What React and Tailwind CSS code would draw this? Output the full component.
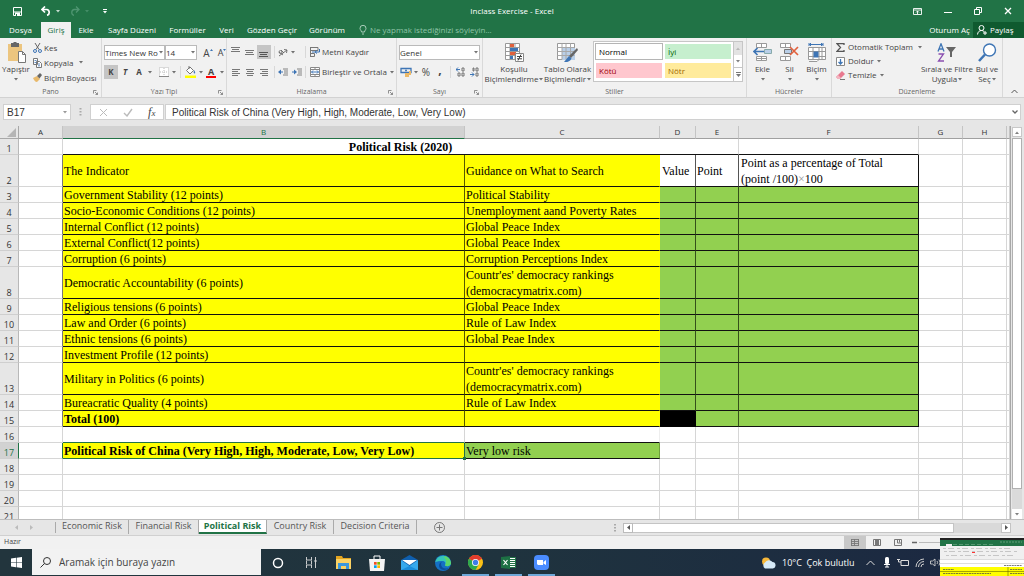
import clsx from "clsx";

const ribbonTabs = [
  { name: "Dosya", width: "w-[41px]" },
  { name: "Giriş", width: "w-[30px]", active: true },
  { name: "Ekle", width: "w-[30px]" },
  { name: "Sayfa Düzeni", width: "w-[62px]" },
  { name: "Formüller", width: "w-[49px]" },
  { name: "Veri", width: "w-[29px]" },
  { name: "Gözden Geçir", width: "w-[62px]" },
  { name: "Görünüm", width: "w-[48px]" },
];

const columns = [
  { name: "A", width: "w-[44px]" },
  { name: "B", width: "w-[402px]" },
  { name: "C", width: "w-[195px]" },
  { name: "D", width: "w-[36px]" },
  { name: "E", width: "w-[43px]" },
  { name: "F", width: "w-[180px]" },
  { name: "G", width: "w-[44px]" },
  { name: "H", width: "w-[44px]" },
  { name: "", width: "" },
];

const indicators = [
  { row: 3, name: "Government Stability (12 points)", guide: "Political Stability" },
  { row: 4, name: "Socio-Economic Conditions (12 points)", guide: "Unemployment aand Poverty Rates" },
  { row: 5, name: "Internal Conflict (12 points)", guide: "Global Peace Index" },
  { row: 6, name: "External Conflict(12 points)", guide: "Global Peace Index" },
  { row: 7, name: "Corruption (6 points)", guide: "Corruption Perceptions Index" },
  { row: 8, name: "Democratic Accountability (6 points)", guide: "Countr'es' democracy rankings\n(democracymatrix.com)", tall: true },
  { row: 9, name: "Religious tensions (6 points)", guide: "Global Peace Index" },
  { row: 10, name: "Law and Order (6 points)", guide: "Rule of Law Index" },
  { row: 11, name: "Ethnic tensions (6 points)", guide: "Global Peae Index" },
  { row: 12, name: "Investment Profile (12 points)", guide: "" },
  { row: 13, name: "Military in Politics (6 points)", guide: "Countr'es' democracy rankings\n(democracymatrix.com)", tall: true },
  { row: 14, name: "Bureacratic Quality (4 points)", guide: "Rule of Law Index" },
  { row: 15, name: "Total (100)", guide: "", total: true },
];

const sheets = [
  { name: "Economic Risk", width: "w-[73px]" },
  { name: "Financial Risk", width: "w-[70px]" },
  { name: "Political Risk", width: "w-[68px]", active: true },
  { name: "Country Risk", width: "w-[67px]" },
  { name: "Decision Criteria", width: "w-[83px]" },
];

/* ---------- small shared pieces ---------- */

function Svg({ w, h, children, className }) {
  return (
    <svg width={w} height={h} viewBox={`0 0 ${w} ${h}`} fill="none" className={clsx("shrink-0", className)} aria-hidden="true">
      {children}
    </svg>
  );
}

function Caret({ className }) {
  return (
    <Svg w={4} h={3} className={className}>
      <path d="M0 0h4L2 2.500z" fill="currentColor" fillOpacity=".75" />
    </Svg>
  );
}

function Tool({ label, width = "w-[14px]", active, children }) {
  return (
    <button aria-label={label} className={clsx("flex h-[14px] shrink-0 items-center justify-center", width, active && "bg-[#c5c5c5]")}>
      {children}
    </button>
  );
}

function Divider() {
  return <span className="h-3 w-px shrink-0 bg-[#d8d8d8]" />;
}

function Group({ label, width, launcher, children }) {
  return (
    <section className={clsx("flex shrink-0 flex-col border-r border-[#d9d9d9]", width)}>
      <div className="flex h-12 text-[#444]">{children}</div>
      <div className="relative flex h-[11px] items-center justify-center text-[7px] leading-none text-[#666]">
        {label}
        {launcher && (
          <Svg w={5} h={5} className="absolute right-[3px] top-[4px]">
            <path d="M.5 3.500v-3h3M2 2l2.500 2.500M4.500 2.500v2h-2" stroke="#777" strokeWidth=".8" />
          </Svg>
        )}
      </div>
    </section>
  );
}

function BigButton({ icon, lines, width }) {
  return (
    <button className={clsx("flex shrink-0 flex-col items-center pt-[3px] whitespace-nowrap", width)}>
      <span className="flex h-[23px] items-center">{icon}</span>
      <span className="leading-[10px]">{lines[0]}</span>
      <span className="flex h-[10px] items-center gap-px leading-[10px]">
        {lines[1]}
        <Caret />
      </span>
    </button>
  );
}

function SelectBox({ label, value, width }) {
  return (
    <div className={clsx("relative h-[15px] shrink-0", width)}>
      <select aria-label={label} className="block h-full w-full appearance-none border border-[#bababa] bg-white pl-0 text-[8px] leading-[13px] text-[#333]">
        <option>{value}</option>
      </select>
      <Caret className="pointer-events-none absolute right-[2px] top-[6px] text-[#444]" />
    </div>
  );
}

function Lines({ rows, color = "#777" }) {
  return (
    <Svg w={10} h={10}>
      {rows.map(([x, y, len]) => (
        <path key={y} d={`M${x} ${y + 0.5}h${len}`} stroke={color} />
      ))}
    </Svg>
  );
}

/* ---------- title bar ---------- */

function TitleBar() {
  return (
    <header className="relative flex h-[22px] shrink-0 items-center justify-between text-white">
      <div className="flex items-center pl-[13px]">
        <button aria-label="Kaydet">
          <Svg w={9} h={9}>
            <path d="M.5.5h8v8h-8zM.5 5h8" stroke="#fff" />
            <path d="M2 5.500h5v3H2z" fill="#fff" />
            <path d="M3 7h1v2H3z" fill="#217346" />
          </Svg>
        </button>
        <button aria-label="Geri al" className="ml-[19px] flex items-center gap-[5px]">
          <Svg w={10} h={10}>
            <path d="M1 3.500h5a3 3 0 0 1 0 5.800M4 .5l-3 3 3 3" stroke="#fff" strokeWidth="1.700" />
          </Svg>
          <Caret />
        </button>
        <button aria-label="Yinele" className="ml-[10px] flex items-center gap-[5px] text-[#4f9571]">
          <Svg w={10} h={10}>
            <path d="M9 3.500H4a3 3 0 0 0 0 5.800M6 .5l3 3-3 3" stroke="currentColor" strokeWidth="1.300" />
          </Svg>
          <Caret />
        </button>
        <button aria-label="Hızlı erişim" className="ml-[14px]">
          <Svg w={4} h={5}>
            <path d="M0 .5h4" stroke="#fff" />
            <path d="M0 2h4L2 4.500z" fill="#fff" />
          </Svg>
        </button>
      </div>
      <h1 className="pointer-events-none absolute inset-x-0 text-center text-[8px]">Inclass Exercise - Excel</h1>
      <div className="flex items-center gap-[22px] pr-3">
        <button aria-label="Şerit seçenekleri">
          <Svg w={9} h={7}>
            <path d="M.5.5h8v6h-8zM.5 2h8M4.500 6V3M3 4.500L4.500 3 6 4.500" stroke="#fff" strokeWidth=".9" />
          </Svg>
        </button>
        <button aria-label="Simge durumuna küçült">
          <Svg w={8} h={8}><path d="M0 5.500h8" stroke="#fff" /></Svg>
        </button>
        <button aria-label="Geri yükle">
          <Svg w={8} h={8}><path d="M.5 2.500h5v5h-5zM2.500 2.500v-2h5v5h-2" stroke="#fff" /></Svg>
        </button>
        <button aria-label="Kapat">
          <Svg w={8} h={8}><path d="M1 1l6 6M7 1L1 7" stroke="#fff" strokeWidth="1.300" /></Svg>
        </button>
      </div>
    </header>
  );
}

function TabBar() {
  return (
    <nav className="flex h-4 shrink-0 text-[8px] text-white">
      {ribbonTabs.map((tab) => (
        <button
          key={tab.name}
          className={clsx("shrink-0 text-center whitespace-nowrap", tab.width, tab.active && "bg-[#f1f1f1] text-[#217346]")}
        >
          {tab.name}
        </button>
      ))}
      <label className="ml-2 flex flex-1 items-center gap-[3px]">
        <Svg w={8} h={10}>
          <path d="M2.500 7C2.500 5.500 1 5 1 3.300a3 3 0 0 1 6 0C7 5 5.500 5.500 5.500 7zM3 9h2" stroke="#a9cdb9" />
        </Svg>
        <input
          aria-label="Yardım ara"
          placeholder="Ne yapmak istediğinizi söyleyin..."
          className="w-full min-w-0 bg-transparent outline-none placeholder:text-[#8fc3a6] placeholder:opacity-100"
        />
      </label>
      <button className="w-[47px] shrink-0 text-center whitespace-nowrap">Oturum Aç</button>
      <button className="flex w-[51px] shrink-0 items-center gap-[3px] bg-[#0f5a2f] pl-[4px]">
        <Svg w={10} h={10}>
          <circle cx="4.500" cy="3" r="2.500" stroke="#fff" />
          <path d="M.5 9.500c.3-2.500 1.700-4 4-4 1 0 2 .4 2.500 1M6 8h4M8 6v4" stroke="#fff" />
        </Svg>
        Paylaş
      </button>
    </nav>
  );
}

/* ---------- ribbon ---------- */

function ClipboardGroup() {
  return (
    <Group label="Pano" width="w-[102px]" launcher>
      <BigButton
        width="w-8"
        lines={["Yapıştır", ""]}
        icon={
          <Svg w={19} h={21}>
            <path d="M1 2h14v17H1z" fill="#ecc57f" />
            <path d="M4 1h2l1-1h2l1 1h2v4H4z" fill="#666" />
            <path d="M11.500 9.500h4l3 3v8h-7z" fill="#fff" stroke="#777" />
            <path d="M15.500 9.500v3h3" stroke="#777" />
          </Svg>
        }
      />
      <div className="flex flex-col pt-[2px] pl-[1px] [&>button]:flex [&>button]:h-[15px] [&>button]:items-center [&>button]:gap-[2px] [&>button]:whitespace-nowrap">
        <button>
          <Svg w={9} h={10}>
            <path d="M2 0l4 6.500M7 0L3 6.500" stroke="#666" />
            <circle cx="2" cy="8" r="1.500" stroke="#3e75b5" />
            <circle cx="7" cy="8" r="1.500" stroke="#3e75b5" />
          </Svg>
          Kes
        </button>
        <button>
          <Svg w={9} h={10}>
            <path d="M.5.5h4v6h-4zM3.500 3.500h3l2 2v4h-5z" fill="#fff" stroke="#777" />
            <path d="M1.500 2.500h2M1.500 4.500h2M5 6h2M5 7.800h2" stroke="#3e75b5" strokeWidth=".8" />
          </Svg>
          Kopyala
          <Caret className="ml-[3px]" />
        </button>
        <button>
          <Svg w={9} h={9}>
            <path d="M0 5l4-2 3 3-3 3C2 9 1 7 0 5z" fill="#e8b96b" />
            <path d="M4 3l3-3 2 2-2.500 3.500z" fill="#666" />
          </Svg>
          Biçim Boyacısı
        </button>
      </div>
    </Group>
  );
}

function FontGroup() {
  return (
    <Group label="Yazı Tipi" width="w-[125px]" launcher>
      <div className="flex flex-col gap-[5px] pt-[7px] pl-[2px]">
        <div className="flex items-center">
          <SelectBox label="Yazı tipi" value="Times New Ro" width="w-[61px]" />
          <SelectBox label="Yazı tipi boyutu" value="14" width="w-8" />
          <Tool label="Büyüt" width="ml-1 w-[14px]">
            <span className="text-[10px] leading-none">A</span>
            <Svg w={3} h={8}><path d="M0 2l1.500-2L3 2z" fill="#3e75b5" /></Svg>
          </Tool>
          <Tool label="Küçült">
            <span className="text-[9px] leading-none">A</span>
            <Svg w={3} h={8}><path d="M0 0h3L1.500 2z" fill="#3e75b5" /></Svg>
          </Tool>
        </div>
        <div className="flex items-center">
          <Tool label="Kalın" active><b>K</b></Tool>
          <Tool label="İtalik"><b className="italic">T</b></Tool>
          <Tool label="Altı çizili"><b>A</b></Tool>
          <Tool label="Altı çizili seçenekleri" width="w-2"><Caret /></Tool>
          <Tool label="Kenarlık" width="ml-[4px] w-[12px]">
            <Svg w={10} h={10}>
              <path d="M.5.5h9v9h-9z" fill="#fff" stroke="#bbb" strokeDasharray="1 1" />
              <path d="M5 1v8M1 5h8" stroke="#bbb" strokeDasharray="1 1" />
              <path d="M0 9.500h10" stroke="#888" />
            </Svg>
          </Tool>
          <Tool label="Kenarlık seçenekleri" width="w-2"><Caret /></Tool>
          <span className="w-[2px]" />
          <Divider />
          <Tool label="Dolgu rengi" width="ml-[2px] w-[14px]">
            <Svg w={11} h={12}>
              <path d="M5 1L1.500 4.500 5 8l3.500-3.500zM4 0v3" stroke="#777" fill="#fff" />
              <path d="M9 4c1.500 2 1.500 3.500.5 3.500S8.500 6 9 4z" fill="#3e75b5" />
              <path d="M0 9.500h11v2.500H0z" fill="#ff0" />
            </Svg>
          </Tool>
          <Tool label="Dolgu seçenekleri" width="w-[7px]"><Caret /></Tool>
          <Tool label="Yazı rengi">
            <span className="border-b-2 border-[#f00] px-[2px] text-[9px] leading-[9px] font-bold">A</span>
          </Tool>
          <Tool label="Yazı rengi seçenekleri" width="w-[7px]"><Caret /></Tool>
        </div>
      </div>
    </Group>
  );
}

function AlignGroup() {
  return (
    <Group label="Hizalama" width="w-[170px]" launcher>
      <div className="flex flex-col gap-[6px] pt-[7px] pl-[2px]">
        <div className="flex h-[14px] items-center">
          <Tool label="Üste hizala"><Lines rows={[[0, 0, 9], [1, 2, 7], [0, 4, 9]]} /></Tool>
          <Tool label="Ortaya hizala"><Lines rows={[[0, 3, 9], [1, 5, 7], [0, 7, 9]]} /></Tool>
          <Tool label="Alta hizala" active><Lines rows={[[0, 5, 9], [1, 7, 7], [0, 9, 9]]} color="#555" /></Tool>
          <span className="w-[3px]" />
          <Divider />
          <Tool label="Yönlendirme" width="w-[16px]">
            <Svg w={10} h={9}>
              <path d="M1 8l8-6M6 1.500l3 .5-.5 3M1 4l4 3M3 2l3 3" stroke="#666" strokeWidth=".9" />
              <circle cx="2.500" cy="4" r="1.500" stroke="#666" strokeWidth=".8" />
            </Svg>
          </Tool>
          <Caret />
          <span className="w-[10px]" />
          <Divider />
          <button className="ml-1 flex items-center gap-px whitespace-nowrap">
            <Svg w={11} h={10}>
              <path d="M.5 0v10M0 .5h8v3H0M0 6.500h4.500v3H0" stroke="#777" />
              <path d="M2 5h7.500V2M5 5l2-1.500M5 5l2 1.500" stroke="#3e75b5" />
            </Svg>
            Metni Kaydır
          </button>
        </div>
        <div className="flex h-[14px] items-center">
          <Tool label="Sola hizala"><Lines rows={[[1, 2, 8], [1, 4, 6], [1, 6, 8], [1, 8, 6]]} /></Tool>
          <Tool label="Ortala"><Lines rows={[[1, 2, 8], [2, 4, 6], [1, 6, 8], [2, 8, 6]]} /></Tool>
          <Tool label="Sağa hizala"><Lines rows={[[1, 2, 8], [3, 4, 6], [1, 6, 8], [3, 8, 6]]} /></Tool>
          <span className="w-[3px]" />
          <Divider />
          <Tool label="Girintiyi azalt" width="ml-[1px] w-[14px]">
            <Svg w={10} h={8}>
              <path d="M5 1h5M6 3h4M6 5h4M5 7h5" stroke="#777" strokeWidth=".9" />
              <path d="M0 4l3-2.500v5z" fill="#3e75b5" />
              <path d="M2 4h3" stroke="#3e75b5" />
            </Svg>
          </Tool>
          <Tool label="Girintiyi artır">
            <Svg w={10} h={8}>
              <path d="M5 1h5M6 3h4M6 5h4M5 7h5" stroke="#777" strokeWidth=".9" />
              <path d="M5 4L2 1.500v5z" fill="#3e75b5" />
              <path d="M0 4h3" stroke="#3e75b5" />
            </Svg>
          </Tool>
          <span className="w-[1px]" />
          <Divider />
          <button className="ml-1 flex items-center gap-px whitespace-nowrap">
            <Svg w={11} h={10}>
              <path d="M.5.5h9v9h-9zM.5 2.500h9M.5 7.500h9M5 .5v2M5 7.500v2" fill="#fff" stroke="#888" />
              <path d="M1.500 5h7M3 3.500L1.500 5 3 6.500M7 3.500L8.500 5 7 6.500" stroke="#3e75b5" />
            </Svg>
            Birleştir ve Ortala
            <Caret className="ml-[2px]" />
          </button>
        </div>
      </div>
    </Group>
  );
}

function NumberGroup() {
  return (
    <Group label="Sayı" width="w-[86px]" launcher>
      <div className="flex flex-col gap-[5px] pt-[7px] pl-[2px]">
        <SelectBox label="Sayı biçimi" value="Genel" width="w-[81px]" />
        <div className="flex items-center">
          <Tool label="Finansal biçim">
            <Svg w={12} h={10}>
              <path d="M1 1.500h10v4H1z" stroke="#3e75b5" strokeWidth="1.300" />
              <circle cx="6" cy="3.500" r="1" fill="#3e75b5" />
              <path d="M5 6h4v4H5zM9 4h2v4H9z" fill="#ecb968" />
            </Svg>
          </Tool>
          <Tool label="Finansal seçenekler" width="w-[6px]"><Caret /></Tool>
          <Tool label="Yüzde"><span className="text-[10px]">%</span></Tool>
          <Tool label="Virgül"><b className="pb-1 text-[12px] leading-none">,</b></Tool>
          <span className="w-[3px]" />
          <Divider />
          <Tool label="Ondalık artır" width="ml-[2px] w-[14px]">
            <Svg w={9} h={10}>
              <path d="M0 2.500h4M2 .5L0 2.500l2 2" stroke="#3e75b5" />
              <path d="M6 1h2v3H6zM2 6h2v3H2zM6 6h2v3H6z" stroke="#666" strokeWidth=".9" />
            </Svg>
          </Tool>
          <Tool label="Ondalık azalt">
            <Svg w={9} h={10}>
              <path d="M0 7.500h4M2 5.500l2 2-2 2" stroke="#3e75b5" />
              <path d="M6 1h2v3H6zM3 1h1v3H3zM6 6h2v3H6z" stroke="#666" strokeWidth=".9" />
            </Svg>
          </Tool>
        </div>
      </div>
    </Group>
  );
}

function StyleCell({ name, className }) {
  return <button className={clsx("h-[15px] pl-[3px] text-left", className)}>{name}</button>;
}

function StylesGroup() {
  return (
    <Group label="Stiller" width="w-[264px]">
      <BigButton
        width="ml-[2px] w-[58px]"
        lines={["Koşullu", "Biçimlendirme"]}
        icon={
          <Svg w={21} h={20}>
            <path d="M1.500.5h14v16h-14zM6 .5v16M11 .5v16M1.500 4.500h14M1.500 8.500h14M1.500 12.500h14" fill="#fff" stroke="#999" />
            <path d="M6 1h4v3H6zM6 9h6v3H6z" fill="#e0603c" />
            <path d="M6 5h8v3H6zM6 13h3v3H6z" fill="#3e75b5" />
            <path d="M11.500 10.500h8v8h-8z" fill="#fff" stroke="#888" />
            <path d="M13 13.500h5M13 15.800h5M17 11.500l-3 6" stroke="#444" />
          </Svg>
        }
      />
      <BigButton
        width="w-[49px]"
        lines={["Tablo Olarak", "Biçimlendir"]}
        icon={
          <Svg w={22} h={20}>
            <path d="M.5.5h17v16H.5z" fill="#fff" stroke="#999" />
            <path d="M5 5h13v12H5z" fill="#b9cfe8" />
            <path d="M5 .5v16M9 .5v16M13.500 .5v16M.5 4.500h17M.5 8.500h17M.5 12.500h17" stroke="#a8a8a8" />
            <path d="M20 5l-8 8 2 2 7-8z" fill="#666" />
            <path d="M12 13l-5 6c3 .5 6-.5 7.500-3.500z" fill="#3e75b5" />
          </Svg>
        }
      />
      <div className="mt-[3px] ml-[1px] flex h-[41px] flex-1 border border-[#c6c6c6] bg-white">
        <div className="grid flex-1 grid-cols-2 content-start gap-x-[3px] gap-y-1 p-[2px]">
          <StyleCell name="Normal" className="text-black outline outline-[#b5b5b5]" />
          <StyleCell name="İyi" className="bg-[#c6efce] text-[#006100]" />
          <StyleCell name="Kötü" className="bg-[#ffc7ce] text-[#9c0006]" />
          <StyleCell name="Nötr" className="bg-[#ffeb9c] text-[#9c6500]" />
        </div>
        <div className="flex w-[9px] flex-col border-l border-[#c6c6c6] text-[#555] [&>button]:flex [&>button]:flex-1 [&>button]:items-center [&>button]:justify-center">
          <button aria-label="Önceki stiller" className="bg-[#e3e3e3] text-[#aaa]"><Caret className="rotate-180" /></button>
          <button aria-label="Sonraki stiller"><Caret /></button>
          <button aria-label="Tüm stiller" className="border-t border-[#c6c6c6]">
            <Svg w={5} h={5}><path d="M0 .5h5" stroke="#777" /><path d="M0 2h5L2.500 5z" fill="#777" /></Svg>
          </button>
        </div>
      </div>
      <span className="w-[3px]" />
    </Group>
  );
}

function CellsGroup() {
  return (
    <Group label="Hücreler" width="w-[85px]">
      <BigButton
        width="ml-[2px] w-[27px]"
        lines={["Ekle", ""]}
        icon={
          <Svg w={19} h={19}>
            <path d="M3.500 .5h10v4h-10zM8.500 .5v4M3.500 13.500h10v4h-10zM8.500 13.500v4M3.500 15.500h10" fill="#fff" stroke="#999" />
            <path d="M11.500 6.500h7v4h-7z" fill="#b9cfe8" stroke="#8aa" />
            <path d="M1 8.500h10M4.500 5L1 8.500 4.500 12" stroke="#3e75b5" strokeWidth="1.600" />
          </Svg>
        }
      />
      <BigButton
        width="w-[27px]"
        lines={["Sil", ""]}
        icon={
          <Svg w={19} h={19}>
            <path d="M.5 .5h10v4h-10zM5.500 .5v4M.5 13.500h10v4h-10zM5.500 13.500v4" fill="#fff" stroke="#999" />
            <path d="M4.500 6.500h7v4h-7z" fill="#b9cfe8" stroke="#777" />
            <path d="M10 4l8 8M18 4l-8 8" stroke="#e0603c" strokeWidth="1.700" />
          </Svg>
        }
      />
      <BigButton
        width="w-[27px]"
        lines={["Biçim", ""]}
        icon={
          <Svg w={18} h={20}>
            <path d="M1 1.500h14M1 0v3M15 0v3M3 0L1.500 1.500 3 3M13 0l1.500 1.500L13 3" stroke="#3e75b5" />
            <path d="M.5 4.500h17v12H.5zM5 4.500v12M11 4.500v12M14 4.500v12M.5 8.500h17M.5 13.500h17M1 18.500h8l2-2" fill="#fff" stroke="#999" />
            <path d="M5.500 8.500h5v6h-5z" fill="#3e75b5" />
          </Svg>
        }
      />
    </Group>
  );
}

function EditingGroup() {
  return (
    <Group label="Düzenleme" width="w-[171px]">
      <div className="flex w-[88px] shrink-0 flex-col pt-[2px] pl-1 [&>button]:flex [&>button]:h-[14px] [&>button]:items-center [&>button]:gap-[3px] [&>button]:whitespace-nowrap">
        <button>
          <Svg w={9} h={9}><path d="M8 2V.7H1l3.500 3.800L1 8.300h7V7" stroke="#555" strokeWidth="1.300" /></Svg>
          Otomatik Toplam
          <Caret className="ml-[2px]" />
        </button>
        <button>
          <Svg w={9} h={9}>
            <path d="M.5.5h8v8h-8z" fill="#fff" stroke="#888" />
            <path d="M4.500 2v5M2.500 5l2 2 2-2" stroke="#3e75b5" strokeWidth="1.300" />
          </Svg>
          Doldur
          <Caret />
        </button>
        <button>
          <Svg w={9} h={9}>
            <path d="M6 0l3 3-5 5H2L0 6z" fill="#e8798f" />
            <path d="M0 6l2-2 3 3-1 1H2z" fill="#f3b4c0" />
            <path d="M4 8.500h5" stroke="#777" />
          </Svg>
          Temizle
          <Caret />
        </button>
      </div>
      <BigButton
        width="w-[54px]"
        lines={["Sırala ve Filtre", "Uygula"]}
        icon={
          <Svg w={20} h={20}>
            <path d="M1 8.500L4 .800l3 7.700M2 6h4" stroke="#3e75b5" strokeWidth="1.300" />
            <path d="M1.500 11h5l-5 7h5.500" stroke="#8a4fb0" strokeWidth="1.300" />
            <path d="M9 4h10l-4 5v5h-2V9z" fill="#666" />
          </Svg>
        }
      />
      <BigButton
        width="w-[26px]"
        lines={["Bul ve", "Seç"]}
        icon={
          <Svg w={19} h={19}>
            <circle cx="11.500" cy="7" r="6" fill="#fff" stroke="#3e75b5" strokeWidth="1.400" />
            <path d="M7 11.500L1 18" stroke="#3e75b5" strokeWidth="2.500" />
          </Svg>
        }
      />
    </Group>
  );
}

function Ribbon() {
  return (
    <div className="flex h-[60px] shrink-0 border-b border-[#d2d2d2] bg-[#f1f1f1] text-[8px]">
      <ClipboardGroup />
      <FontGroup />
      <AlignGroup />
      <NumberGroup />
      <StylesGroup />
      <CellsGroup />
      <EditingGroup />
      <button aria-label="Şeridi daralt" className="ml-auto self-end pr-[6px] pb-[3px]">
        <Svg w={7} h={5}><path d="M.5 4l3-3 3 3" stroke="#555" /></Svg>
      </button>
    </div>
  );
}

/* ---------- formula bar ---------- */

function FormulaBar() {
  return (
    <div className="flex h-7 shrink-0 items-center px-[3px]">
      <div className="relative">
        <input
          aria-label="Ad kutusu"
          defaultValue="B17"
          className="block h-4 w-[68px] border border-[#d0d0d0] bg-white pl-[3px] font-['Liberation_Sans',sans-serif] text-[10px] text-[#333]"
        />
        <Caret className="absolute top-[7px] right-[4px] text-[#777]" />
      </div>
      <Svg w={3} h={9} className="mx-2">
        <path d="M1.500 0v9" stroke="#aaa" strokeWidth="2" strokeDasharray="1.500 1.500" />
      </Svg>
      <div className="flex h-4 w-[74px] shrink-0 items-center justify-around border border-[#d0d0d0] bg-white">
        <button aria-label="İptal"><Svg w={9} h={9}><path d="M1 1l7 7M8 1L1 8" stroke="#bbb" /></Svg></button>
        <button aria-label="Gir"><Svg w={10} h={9}><path d="M1 5l3 3 5-7" stroke="#bbb" strokeWidth="1.400" /></Svg></button>
        <button aria-label="İşlev ekle" className="font-['Liberation_Serif',serif] text-[12px] leading-none text-[#444] italic">
          f<span className="text-[9px]">x</span>
        </button>
      </div>
      <div className="relative ml-[1px] flex-1">
        <input
          aria-label="Formül çubuğu"
          defaultValue="Political Risk of China (Very High, High, Moderate, Low, Very Low)"
          className="block h-4 w-full border border-[#d0d0d0] bg-white pl-[6px] font-['Liberation_Sans',sans-serif] text-[10px] text-[#333]"
        />
        <Svg w={6} h={4} className="absolute top-[6px] right-[3px]"><path d="M.5.5L3 3 5.500 .5" stroke="#666" strokeWidth="1.300" /></Svg>
      </div>
    </div>
  );
}

/* ---------- sheet ---------- */

const grid = "border-r border-b border-[#d6d6d6]";

function RowHead({ n, selected }) {
  return (
    <th
      scope="row"
      className={clsx(
        "border-r border-b p-0 text-center align-bottom font-['Open_Sans',sans-serif] text-[9px] leading-[11px] font-normal",
        selected ? "border-[#217346] border-b-[#cfcfcf] bg-[#d2d2d2] text-[#217346]" : "border-[#b8b8b8] border-b-[#cfcfcf] bg-[#e6e6e6] text-[#333]"
      )}
    >
      {n}
    </th>
  );
}

function Cell({ children, className, colSpan, tall }) {
  return (
    <td colSpan={colSpan} className={clsx("border-r border-b px-[1px] py-0 align-middle", className)}>
      {children && <div className={clsx("leading-4 whitespace-pre", tall ? "h-[31px]" : "h-[15px]")}>{children}</div>}
    </td>
  );
}

function Blank({ count }) {
  return Array.from({ length: count }, (_, i) => <td key={i} className={grid} />);
}

function Sheet() {
  return (
    <main className="flex min-h-0 flex-1 overflow-hidden bg-[#e6e6e6]">
      <div className="min-w-0 flex-1 overflow-hidden border-r border-[#a8a8a8] bg-white">
        <table className="w-full table-fixed border-separate border-spacing-0 font-['Liberation_Serif',serif] text-[12px] text-black">
          <thead>
            <tr className="h-[13px] bg-[#e6e6e6] font-['Open_Sans',sans-serif] text-[8px] leading-[12px] text-[#333]">
              <th aria-label="Tümünü seç" className="w-[19px] border-r border-b border-[#a8a8a8] p-0">
                <Svg w={10} h={9} className="mr-[1px] ml-auto"><path d="M9 0v9H0z" fill="#b5b5b5" /></Svg>
              </th>
              {columns.map((col) => (
                <th
                  key={col.name}
                  scope="col"
                  className={clsx(
                    "border-r border-b border-r-[#c4c4c4] p-0 font-medium",
                    col.width,
                    col.name === "B" ? "border-b-[#217346] bg-[#d2d2d2] text-[#217346]" : "border-b-[#a0a0a0]"
                  )}
                >
                  {col.name}
                </th>
              ))}
            </tr>
          </thead>
          <tbody>
            <tr className="h-4">
              <RowHead n={1} />
              <td className={grid} />
              <Cell colSpan={4} className="border-r-[#d6d6d6] border-b-[#111] text-center font-bold">Political Risk (2020)</Cell>
              <td className="border-r border-b border-r-[#d6d6d6] border-b-[#111]" />
              <Blank count={3} />
            </tr>
            <tr className="h-8">
              <RowHead n={2} />
              <td className="border-r border-b border-r-[#777] border-b-[#d6d6d6]" />
              <Cell className="border-r-[#555a00] border-b-[#111] bg-[#ff0]">The Indicator</Cell>
              <Cell className="border-r-[#ff0] border-b-[#111] bg-[#ff0]">Guidance on What to Search</Cell>
              <Cell className="border-r-[#555] border-b-[#111] pl-[2px]">Value</Cell>
              <Cell className="border-r-[#555] border-b-[#111]">Point</Cell>
              <Cell tall className="border-[#111] pl-[2px]">
                <div>Point as a percentage of Total</div>
                <div className="flex">
                  <span>(point /100)</span>
                  <span className="text-[#999]">×</span>
                  <span>100</span>
                </div>
              </Cell>
              <Blank count={3} />
            </tr>
            {indicators.map((item) => (
              <tr key={item.row} className={item.tall ? "h-8" : "h-4"}>
                <RowHead n={item.row} />
                <td className="border-r border-b border-r-[#777] border-b-[#d6d6d6]" />
                <Cell className={clsx("border-r-[#555a00] border-b-[#111] bg-[#ff0]", item.total && "font-bold")}>{item.name}</Cell>
                <Cell tall={item.tall} className="border-r-[#ff0] border-b-[#111] bg-[#ff0]">{item.guide}</Cell>
                <Cell className={item.total ? "border-black bg-black" : "border-r-[#35501a] border-b-[#111] bg-[#92d050]"} />
                <Cell className="border-r-[#35501a] border-b-[#111] bg-[#92d050]" />
                <Cell className="border-[#111] bg-[#92d050]" />
                <Blank count={3} />
              </tr>
            ))}
            <tr className="h-4">
              <RowHead n={16} />
              <td className={grid} />
              <td className="border-r border-b border-r-[#d6d6d6] border-b-[#217346]" />
              <td className="border-r border-b border-r-[#eee] border-b-[#111]" />
              <Blank count={6} />
            </tr>
            <tr className="h-4">
              <RowHead n={17} selected />
              <td className="border-r border-b border-r-[#217346] border-b-[#d6d6d6]" />
              <td className="relative border-r border-b border-[#217346] bg-[#ff0] px-[1px] py-0 font-bold">
                <div className="h-[15px] leading-4 whitespace-nowrap">
                  Political Risk of China (Very High, High, Moderate, Low, Very Low)
                </div>
                <span className="absolute -right-[2px] -bottom-[2px] h-[3px] w-[3px] bg-[#217346]" />
              </td>
              <Cell className="border-r-[#6f9f3c] border-b-[#111] bg-[#92d050]">Very low risk</Cell>
              <Blank count={6} />
            </tr>
            {[18, 19, 20, 21].map((n) => (
              <tr key={n} className="h-4">
                <RowHead n={n} />
                <Blank count={9} />
              </tr>
            ))}
          </tbody>
        </table>
      </div>
      <div className="flex w-[13px] shrink-0 flex-col items-center pt-[1px] pr-[1px]">
        <button aria-label="Yukarı kaydır" className="flex h-[10px] w-[10px] items-center justify-center border border-[#c8c8c8] bg-white text-[#555]">
          <Caret className="rotate-180" />
        </button>
        <div className="mt-[1px] w-[10px] flex-1 border border-[#b0b0b0] bg-white" />
        <div className="h-5 w-[10px] bg-[#dadada]" />
        <button aria-label="Aşağı kaydır" className="flex h-[10px] w-[10px] items-center justify-center bg-white text-[#555]">
          <Caret />
        </button>
      </div>
    </main>
  );
}

function SheetTabs() {
  return (
    <div className="flex h-4 shrink-0 border-t border-[#bdbdbd] text-[9px] text-[#555]">
      <div className="my-[2px] flex w-14 shrink-0 items-center gap-3 border-r border-[#aaa] pl-[15px]">
        <button aria-label="Önceki sayfa"><Svg w={3} h={5}><path d="M3 0v5L0 2.500z" fill="#bbb" /></Svg></button>
        <button aria-label="Sonraki sayfa"><Svg w={3} h={5}><path d="M0 0v5l3-2.500z" fill="#bbb" /></Svg></button>
      </div>
      {sheets.map((sheet) => (
        <button
          key={sheet.name}
          className={clsx(
            "flex h-[14px] shrink-0 items-start justify-center border-r leading-[12px] whitespace-nowrap",
            sheet.width,
            sheet.active ? "border-b-2 border-r-[#aaa] border-b-[#217346] bg-white font-bold text-[#217346]" : "border-[#aaa]"
          )}
        >
          {sheet.name}
        </button>
      ))}
      <button aria-label="Yeni sayfa" className="ml-[17px]">
        <Svg w={11} h={11}>
          <circle cx="5.500" cy="5.500" r="5" stroke="#777" />
          <path d="M2.500 5.500h6M5.500 2.500v6" stroke="#777" />
        </Svg>
      </button>
      <div className="ml-auto flex w-[410px] items-center pr-[13px]">
        <Svg w={2} h={8}><path d="M1 0v8" stroke="#aaa" strokeWidth="2" strokeDasharray="1.500 1.500" /></Svg>
        <button aria-label="Sola kaydır" className="ml-[7px] flex h-[10px] w-[10px] items-center justify-center border border-[#bbb] bg-white">
          <Svg w={3} h={5}><path d="M3 0v5L0 2.500z" fill="#555" /></Svg>
        </button>
        <div className="h-[10px] flex-1 border border-l-0 border-[#c4c4c4] bg-white" />
        <div className="h-[10px] w-[47px] bg-[#d9d9d9]" />
        <button aria-label="Sağa kaydır" className="flex h-[10px] w-[10px] items-center justify-center border border-[#c4c4c4] bg-white">
          <Svg w={3} h={5}><path d="M0 0v5l3-2.500z" fill="#555" /></Svg>
        </button>
      </div>
    </div>
  );
}

function StatusBar() {
  return (
    <div className="flex h-[14px] shrink-0 items-center border-t border-[#d0d0d0] bg-[#f1f1f1] pl-[4px] text-[7px] text-[#444]">
      Hazır
      <div className="ml-auto flex h-full w-[180px] items-center">
        <button aria-label="Normal görünüm" className="flex h-full w-[22px] items-center justify-center bg-[#c8c8c8]">
          <Svg w={8} h={7}><path d="M0 .5h8M0 2.500h8M0 4.500h8M0 6.500h8M.5 0v7M3.500 0v7M7.500 0v7" stroke="#777" strokeWidth=".9" /></Svg>
        </button>
        <button aria-label="Sayfa düzeni" className="flex w-[21px] justify-center">
          <Svg w={8} h={7}><path d="M.5.5h7v6h-7z" stroke="#777" /><path d="M2 1h4v5H2z" fill="#777" /></Svg>
        </button>
        <button aria-label="Sayfa sonu önizleme" className="flex w-[22px] justify-center">
          <Svg w={8} h={7}><path d="M.5.5h7v6h-7zM3.500 .5v3.500h4M5.500 .5v3" stroke="#777" /></Svg>
        </button>
        <button aria-label="Uzaklaştır" className="ml-[3px]"><Svg w={5} h={3}><path d="M0 1.500h5" stroke="#666" strokeWidth="1.500" /></Svg></button>
        <input
          aria-label="Yakınlaştırma"
          type="range"
          defaultValue="50"
          className="ml-[2px] h-px w-[70px] appearance-none bg-[#bbb] [&::-webkit-slider-thumb]:h-[7px] [&::-webkit-slider-thumb]:w-[3px] [&::-webkit-slider-thumb]:appearance-none [&::-webkit-slider-thumb]:bg-[#666]"
        />
      </div>
    </div>
  );
}

/* ---------- taskbar ---------- */

function TaskButton({ label, open, children }) {
  return (
    <button aria-label={label} className="relative flex w-[33px] shrink-0 items-center justify-center">
      {children}
      {open && <span className="absolute inset-x-[3px] bottom-0 h-[2px] bg-[#6ea8d8]" />}
    </button>
  );
}

function Taskbar() {
  return (
    <footer className="flex h-[27px] shrink-0 bg-linear-to-r from-[#22353d] via-[#1f333e] via-50% to-[#1b2742] text-[9px] text-white">
      <button aria-label="Başlat" className="flex w-8 shrink-0 items-center justify-center">
        <Svg w={11} h={11}>
          <path d="M0 1.500L5 .8v4.400H0zM5.600 .7L11 0v5.200H5.600zM0 5.800h5v4.400L0 9.500zM5.600 5.800H11V11l-5.400-.8z" fill="#fff" />
        </Svg>
      </button>
      <label className="mb-px flex w-[229px] shrink-0 items-center gap-2 bg-[#f2f2f2] pl-2">
        <Svg w={11} h={11}>
          <circle cx="7" cy="4" r="3.500" stroke="#333" />
          <path d="M4.500 6.500L.5 10.500" stroke="#333" />
        </Svg>
        <input
          aria-label="Ara"
          placeholder="Aramak için buraya yazın"
          className="min-w-0 flex-1 bg-transparent text-[10px] outline-none placeholder:text-[#444] placeholder:opacity-100"
        />
      </label>
      <TaskButton label="Cortana">
        <Svg w={12} h={12}><circle cx="6" cy="6" r="4.500" stroke="#fff" strokeWidth="1.500" /></Svg>
      </TaskButton>
      <TaskButton label="Görev görünümü">
        <Svg w={12} h={11}>
          <path d="M1.500 0v3h5V0M1.500 11V8h5v3M1.500 3.500v4M6.500 3.500v4M10.500 0v11M9 4h3" stroke="#ddd" strokeWidth=".9" />
        </Svg>
      </TaskButton>
      <TaskButton label="Dosya Gezgini">
        <Svg w={15} h={13}>
          <path d="M0 0h6l1 2h8v11H0z" fill="#e3a520" />
          <path d="M0 3h15v10H0z" fill="#fbd263" />
          <path d="M2 7h11v6h-3v-3H5v3H2z" fill="#3b97dc" />
        </Svg>
      </TaskButton>
      <TaskButton label="Microsoft Store">
        <Svg w={16} h={16}>
          <path d="M5 5V1h6v4" stroke="#fff" />
          <path d="M0 4h16l-1 12H1z" fill="#f4f4f4" />
          <path d="M5 7h2.700v2.700H5z" fill="#f25022" />
          <path d="M8.300 7H11v2.700H8.300z" fill="#7fba00" />
          <path d="M5 10.300h2.700V13H5z" fill="#00a4ef" />
          <path d="M8.300 10.300H11V13H8.300z" fill="#ffb900" />
        </Svg>
      </TaskButton>
      <TaskButton label="Posta">
        <Svg w={17} h={15}>
          <path d="M0 5l8.500-5L17 5v10H0z" fill="#0f5fae" />
          <path d="M1 5h15L8.500 10z" fill="#fff" />
          <path d="M0 5l8.500 6L17 5v10H0z" fill="#37a9ec" />
          <path d="M0 15l8.500-4L17 15z" fill="#1c8ddb" />
        </Svg>
      </TaskButton>
      <TaskButton label="Edge">
        <Svg w={16} h={16}>
          <circle cx="8" cy="8" r="8" fill="#1570c4" />
          <path d="M.2 7A8 8 0 0 1 16 8c0 3-4 4-6 2.500 1-2 .5-4.500-2.500-4.500S1.500 6.500.2 7z" fill="#37c5b8" />
          <path d="M10 1a8 8 0 0 1 6 7c0 3-4 4-6 2.500 2-4 1-6-1-8z" fill="#5bd66b" />
          <path d="M6 9c0 3.500 3 5.500 7.500 4-3 3.500-9 2-9.500-2 0-2 1-4 3.500-4.500C6.500 7 6 8 6 9z" fill="#0c4d9b" />
        </Svg>
      </TaskButton>
      <TaskButton label="Chrome" open>
        <Svg w={15} h={15}>
          <circle cx="7.500" cy="7.500" r="7.500" fill="#fbc116" />
          <path d="M7.500 7.500L1 3.750A7.500 7.500 0 0 1 14 3.750z" fill="#e33b2e" />
          <path d="M7.500 7.500L1 3.750A7.500 7.500 0 0 0 7.500 15l3.200-5.600z" fill="#2da94f" />
          <circle cx="7.500" cy="7.500" r="3.500" fill="#fff" />
          <circle cx="7.500" cy="7.500" r="2.700" fill="#3f7de8" />
        </Svg>
      </TaskButton>
      <TaskButton label="Excel" open>
        <Svg w={15} h={13}>
          <path d="M6.500 1.500h8v10h-8z" fill="#fff" stroke="#217346" />
          <path d="M8 3.500h6M8 5.500h6M8 7.500h6M8 9.500h6" stroke="#217346" />
          <path d="M0 1l9-1v13l-9-1z" fill="#1d7044" />
          <path d="M2.500 4l4 5M6.500 4l-4 5" stroke="#fff" strokeWidth="1.200" />
        </Svg>
      </TaskButton>
      <TaskButton label="Zoom" open>
        <Svg w={15} h={15}>
          <rect width="15" height="15" rx="4" fill="#4a8cff" />
          <path d="M3 5h6v5H4L3 9zM9.500 7L12 5v5L9.500 8.500z" fill="#fff" />
        </Svg>
      </TaskButton>

      <div className="ml-auto flex w-[263px] items-center">
        <Svg w={15} h={12}>
          <circle cx="5" cy="4.500" r="4" fill="#f7b83a" />
          <path d="M4 11.500a3.500 3.500 0 0 1 0-6 4.500 4.500 0 0 1 7.500-.5 3.300 3.300 0 0 1 .5 6.500z" fill="#d6eaf8" />
        </Svg>
        <span className="ml-[6px] w-[82px] whitespace-pre">10°C  Çok bulutlu</span>
        <div className="ml-[2px] flex items-center gap-[5px]">
          <Svg w={9} h={6}><path d="M.5 5l4-4 4 4" stroke="#ddd" /></Svg>
          <Svg w={8} h={11} className="ml-[3px]"><rect x="2" width="4" height="7" rx="1.500" fill="#fff" /><path d="M1 7.500h6M4 7v3M2 10h4" stroke="#fff" /></Svg>
          <Svg w={12} h={9} className="ml-[1px]"><path d="M4 2.500h7.500v5H4zM0 1.500h3M1.500 1.500V4H4" stroke="#ddd" /></Svg>
          <Svg w={9} h={10} className="ml-[1px]">
            <path d="M1 9a8 8 0 0 1 8-8M3.500 9A5.500 5.500 0 0 1 9 3.500M6 9a3 3 0 0 1 3-3" stroke="#ccc" />
          </Svg>
          <Svg w={12} h={9} className="ml-[1px]">
            <path d="M.5 3h2L5 1v7L2.500 6h-2zM7 3q1.200 1.500 0 3M9 1.500q2 3 0 6M11 .5q2 4 0 8" stroke="#ccc" strokeWidth=".9" />
          </Svg>
        </div>
      </div>
    </footer>
  );
}

// shared-screen preview floating above the tray
function ScreenPreview() {
  return (
    <div className="absolute right-0 bottom-0 w-[84px] overflow-hidden border-t-2 bg-white border-[#222]">
      <Svg w={84} h={36}>
        <path d="M0 0h84v6H0z" fill="#217346" />
        <path d="M60 2h22" stroke="#8fbf9f" strokeDasharray="2 1" strokeWidth=".6" />
        <path d="M13 4.500h40" stroke="#6aa883" strokeDasharray="4 2" strokeWidth=".7" />
        <path d="M6 4h6v2H6zM0 6h84v13H0z" fill="#f0f0f0" />
        <path d="M3 8.500h70M4 11.500h75M6 15.500h70" stroke="#bbb" strokeDasharray="3 2 6 3" strokeWidth=".8" />
        <path d="M0 19.500h84M0 23.500h84" stroke="#ddd" />
        <path d="M32 12.500h3" stroke="#f33" />
        <path d="M0 27h84v9H0z" fill="#ff0" />
        <path d="M64 25.500h18M3 29.500h11M70 29.500h12M3 33.500h48M70 33.500h14" stroke="#444" strokeDasharray="2 .6" strokeWidth=".7" />
        <path d="M0 31.500h84M68 27v9" stroke="#660" strokeWidth=".6" />
      </Svg>
    </div>
  );
}

function App() {
  return (
    <div className="relative flex h-screen flex-col overflow-hidden bg-[#e6e6e6] font-['Open_Sans','Noto_Sans',sans-serif]">
      <div className="flex shrink-0 flex-col bg-[#217346]">
        <TitleBar />
        <TabBar />
      </div>
      <Ribbon />
      <FormulaBar />
      <Sheet />
      <SheetTabs />
      <StatusBar />
      <Taskbar />
      <ScreenPreview />
    </div>
  );
}

export default App;
